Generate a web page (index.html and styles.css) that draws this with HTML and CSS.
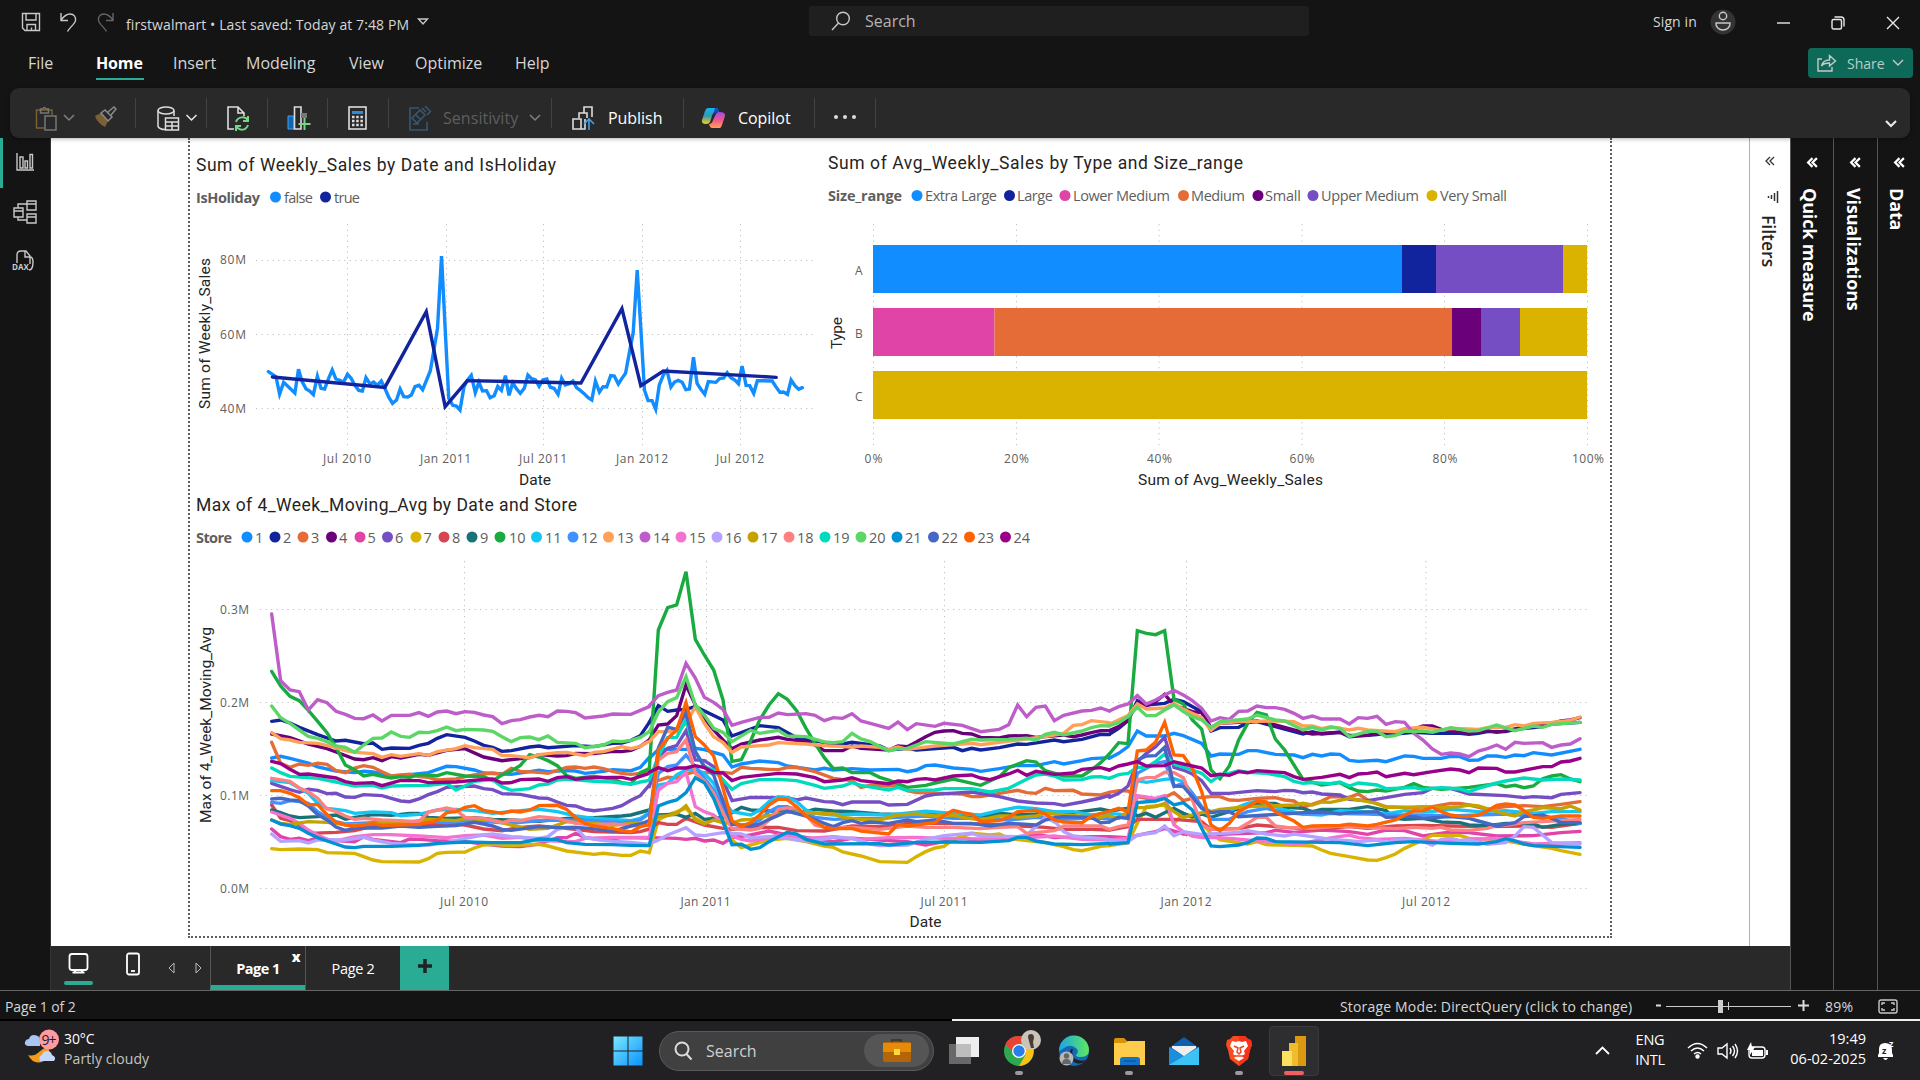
FILE: index.html
```html
<!DOCTYPE html>
<html lang="en">
<head>
<meta charset="utf-8">
<title>firstwalmart</title>
<link rel="stylesheet" href="styles.css">
</head>
<body>
<div class="app">
  <header class="titlebar">
    <div class="quick">
      <svg width="22" height="22" viewBox="0 0 22 22" class="ln"><path d="M2.5 2.500h17v17h-14.500l-2.500-2.500zM6 2.500v6.500h10V2.500M7 19.500v-6h8.500v6M11.500 19.500v-3"/></svg>
      <svg width="20" height="22" viewBox="0 0 20 22" class="ln"><path d="M3 2v7.500h7M3 9C6 5 9 3 12 3c4 0 6 3 5.500 6.500C17 13 11 17 9.500 20.500"/></svg>
      <svg width="20" height="22" viewBox="0 0 20 22" class="ln off"><path d="M17 2v7.500h-7M17 9C14 5 11 3 8 3 4 3 2 6 2.500 9.500 3 13 9 17 10.500 20.500"/></svg>
      <span class="docname">firstwalmart • Last saved: Today at 7:48 PM</span>
      <svg width="12" height="8" viewBox="0 0 12 8" class="ln"><path d="M1.500 1h9L6 6z"/></svg>
    </div>
    <div class="topsearch">
      <svg width="20" height="20" viewBox="0 0 20 20" class="ln"><circle cx="12" cy="7.500" r="6.300"/><path d="M7.500 12L1 19"/></svg>
      <span>Search</span>
    </div>
    <div class="account">
      <span class="signin">Sign in</span>
      <svg width="26" height="26" viewBox="0 0 26 26"><circle cx="13" cy="13" r="12.500" fill="#333"/><g class="ln"><circle cx="13" cy="7" r="3.700"/><path d="M6 14h14c.5 4-3 7-7 7s-7.500-3-7-7z"/></g></svg>
      <svg class="wbtn" width="13" height="13" viewBox="0 0 13 13"><path class="lw" d="M0 6h13"/></svg>
      <svg class="wbtn" width="14" height="14" viewBox="0 0 14 14"><rect class="lw" x="1" y="3.500" width="9.500" height="9.500" rx="1.500"/><path class="lw" d="M3.500 1h6.500q3 0 3 3v6.500"/></svg>
      <svg class="wbtn" width="14" height="14" viewBox="0 0 14 14"><path class="lw" d="M1 1l12 12M13 1L1 13"/></svg>
    </div>
  </header>

  <nav class="menu">
    <span class="m-file">File</span><span class="m-home">Home</span><span class="m-insert">Insert</span><span class="m-model">Modeling</span><span class="m-view">View</span><span class="m-opt">Optimize</span><span class="m-help">Help</span>
    <button class="share">
      <svg width="20" height="18" viewBox="0 0 20 18" class="ln"><path d="M5 5H1v12h14v-4M4.500 12c1-4 4-6 8-6V1.500l6 5.500-6 5V9c-3 0-6 0-8 3z"/></svg>
      <span>Share</span>
      <svg width="12" height="8" viewBox="0 0 12 8" class="ln"><path d="M1 1l5 5 5-5"/></svg>
    </button>
  </nav>

  <div class="ribbon">
    <div class="rgroup g1">
      <svg width="22" height="25" viewBox="0 0 22 25" fill="none" stroke-width="1.500"><path d="M10 22H1.500V4H17v5" stroke="#7d5f35"/><path d="M5.500 4.500V3H8q1-3 3 0h2.500v4h-8z" stroke="#777"/><rect x="10" y="10" width="11" height="14" stroke="#777" fill="#292929"/></svg>
      <svg class="chev off" width="12" height="8" viewBox="0 0 12 8"><path d="M1 1l5 5 5-5"/></svg>
      <svg class="brush" width="23" height="22" viewBox="0 0 23 22"><path d="M1 10l6-3 7 8-3 6q-8-4-10-11z" fill="#7d5f35"/><path d="M7 7l4-3 7 7-4 4zM14 6l6-5 2 2-5 6" fill="#292929" stroke="#8a8a8a" stroke-width="1.500"/></svg>
    </div>
    <div class="rgroup g2">
      <svg width="23" height="25" viewBox="0 0 23 25" fill="none" stroke="#ddd" stroke-width="1.500"><ellipse cx="9" cy="4.500" rx="8" ry="3.500"/><path d="M1 4.500v16q2 3 7 3M17 4.500V10"/><path d="M8.500 12h13v12h-13zM8.500 16h13M8.500 20h13M15 16v8"/></svg>
      <svg class="chev" width="13" height="8" viewBox="0 0 12 8"><path d="M1 1l5 5 5-5"/></svg>
    </div>
    <div class="rgroup g3">
      <svg width="23" height="25" viewBox="0 0 23 25" fill="none" stroke-width="1.600"><path d="M7 23H1V1h10l6 6v3M11 1v6h6" stroke="#ddd"/><path d="M9 16c2-6 10-6 12-1m0-5v5h-5M21 19c-2 6-9 6-12 1m0 5v-5h5" stroke="#77d58a" stroke-width="2"/></svg>
    </div>
    <div class="rgroup g4">
      <svg width="24" height="25" viewBox="0 0 24 25" fill="none"><path d="M1 10h6v13H1z" fill="#1066b5" stroke="#43a0ea"/><path d="M7.500 1H14v22H7.500z" stroke="#ddd" stroke-width="1.600"/><path d="M14 7h6v5h-6z" fill="#777"/><path d="M17.500 12v12M11.500 18h12" stroke="#77d58a" stroke-width="2"/></svg>
    </div>
    <div class="rgroup g5">
      <svg width="20" height="25" viewBox="0 0 20 25"><rect x="1" y="1" width="17" height="22" fill="none" stroke="#ddd" stroke-width="1.600"/><path d="M4 5h11v3H4z" fill="#2f8bd8"/><path d="M4 11h11M4 15h11M4 19h11" stroke="#ddd" stroke-width="2.500" stroke-dasharray="2.500 1.700"/></svg>
    </div>
    <div class="rgroup g6">
      <svg width="23" height="25" viewBox="0 0 23 25" fill="none" stroke="#36566f" stroke-width="1.700"><path d="M10 2H1v22h17v-8M4 18h6M13 2l4 4M16 0l6 6M3 12l8-8 5 5-8 8zM7 9l5 5M18 9l3-3"/></svg>
      <span class="sens">Sensitivity</span>
      <svg class="chev off" width="12" height="8" viewBox="0 0 12 8"><path d="M1 1l5 5 5-5"/></svg>
    </div>
    <div class="rgroup g7">
      <svg width="24" height="25" viewBox="0 0 24 25" fill="none" stroke="#ddd" stroke-width="1.600"><path d="M1 13h8v10H1zM7 12V7h8v5M9 23h4V13M12 7V1h8v10"/><path d="M17 24V13M12 18l5-5 5 5" stroke="#43a0ea"/></svg>
      <span>Publish</span>
    </div>
    <div class="rgroup g8">
      <svg width="24" height="22" viewBox="0 0 24 22"><defs><linearGradient id="ca" x2="0" y2="1"><stop offset="0" stop-color="#17b4f0"/><stop offset=".5" stop-color="#2f9ab0"/><stop offset="1" stop-color="#ffca1b"/></linearGradient><linearGradient id="cb" x2="0" y2="1"><stop offset="0" stop-color="#a24de8"/><stop offset=".5" stop-color="#f0568c"/><stop offset="1" stop-color="#ffa255"/></linearGradient></defs><path d="M6 1h8q2 0 3 4h-4q-2 0-3 4l-2 6q-1 2-4 2-5 0-4-4l3-9q1-3 3-3z" fill="url(#ca)"/><path d="M13 1q3 0 4 4l-4 1-2 3z" fill="#1746c4"/><path d="M18 21h-8q-2 0-3-4 3 0 4-4l3-6q1-2 3-2 7 0 6 4l-3 9q-1 3-2 3z" fill="url(#cb)"/></svg>
      <span>Copilot</span>
    </div>
    <div class="rgroup g9"><i></i><i></i><i></i></div>
    <svg class="chev collapse" width="12" height="8" viewBox="0 0 12 8"><path d="M1 1l5 5 5-5"/></svg>
  </div>

  <main class="work">
    <aside class="rail">
      <span class="active"><svg width="18" height="18" viewBox="0 0 18 18" class="ln"><path d="M1 0v17h17M4 15V4h3v11zM9 15V8h2.500v7zM14 15V1.500h2.500V15z"/></svg></span>
      <span><svg width="24" height="24" viewBox="0 0 24 24" class="ln"><path d="M1 8h9v9H1zM1 11h9M14 1h9v9h-9zM14 4h9M14 14h9v9h-9zM14 17h9M5 8V4h9M5 17v3h9"/></svg></span>
      <span><svg width="23" height="23" viewBox="0 0 23 23" class="ln"><path d="M5 13V5q0-4 4-4h5l4 5v8M13 1v6h5M18 7q3 0 3 5 0 8-4 8"/><text class="daxt" x="0" y="20">DAX</text></svg></span>
    </aside>

    <section class="center">
      <div class="stage">
        <div class="canvas">
          <svg class="v1" width="630" height="350" viewBox="190 138 630 350">
            <text class="vt" x="196" y="171" textLength="360">Sum of Weekly_Sales by Date and IsHoliday</text>
            <text class="lg b" x="196" y="203" textLength="64">IsHoliday</text>
            <circle cx="275.500" cy="197" r="5.500" fill="#118dff"/><text class="lg" x="284" y="203" textLength="29">false</text>
            <circle cx="325.500" cy="197" r="5.500" fill="#12239e"/><text class="lg" x="334" y="203" textLength="26">true</text>
            <path class="gr" d="M256 260.500H813M256 334.500H813M256 408.500H813M347.500 224V447M446.500 224V447M543.500 224V447M642.500 224V447M740.500 224V447"/>
            <text class="tk" x="220" y="264" textLength="26">80M</text><text class="tk" x="220" y="338.500" textLength="26">60M</text><text class="tk" x="220" y="413" textLength="26">40M</text>
            <text class="tk" x="323" y="463" textLength="48">Jul 2010</text><text class="tk" x="420" y="463" textLength="51">Jan 2011</text><text class="tk" x="519" y="463" textLength="48">Jul 2011</text><text class="tk" x="616" y="463" textLength="52">Jan 2012</text><text class="tk" x="716" y="463" textLength="48">Jul 2012</text>
            <text class="ax" x="519" y="485" textLength="32">Date</text>
            <text class="ax" transform="translate(210 409) rotate(-90)" textLength="151">Sum of Weekly_Sales</text>
            <g class="p" transform="translate(190 200) scale(.4018 .33333)">
              <polyline stroke="#118dff" points="195,515 214,530 223,582 233,547 261,579 270,508 279,545 289,567 298,573 307,584 317,529 326,565 335,567 345,535 354,510 363,537 373,541 382,547 392,523 401,535 410,555 420,571 429,573 438,533 448,552 457,546 466,556 476,543 485,565 494,590 504,610 514,600 523,567 532,590 542,591 551,585 560,560 570,556 579,569 598,513 607,450 616,385 626,168 635,385 644,595 654,616 663,618 672,630 682,560 691,540 700,526 710,578 719,547 728,573 738,572 747,593 757,587 766,559 775,571 785,527 794,586 803,549 813,567 822,580 832,565 841,525 850,536 860,540 869,559 878,540 888,537 897,562 906,565 916,583 925,535 934,555 944,551 953,543 962,563 972,572 981,581 991,593 1000,600 1009,543 1019,576 1028,560 1037,561 1047,527 1056,528 1066,552 1075,535 1084,520 1094,455 1103,398 1113,210 1122,385 1131,570 1140,602 1150,602 1159,628 1168,555 1178,525 1187,511 1197,561 1206,546 1215,541 1225,547 1234,569 1243,567 1253,472 1262,550 1271,567 1281,583 1290,545 1309,547 1318,536 1328,534 1337,518 1346,533 1356,540 1365,551 1374,498 1384,556 1393,557 1403,580 1412,542 1449,543 1458,560 1468,577 1477,576 1487,583 1496,540 1506,558 1515,568 1524,563"/>
              <polyline stroke="#12239e" points="205,531 485,562 588,335 635,620 690,542 973,549 1075,326 1122,557 1178,513 1459,532"/>
            </g>
          </svg>
          <svg class="v2" width="790" height="350" viewBox="820 138 790 350">
            <text class="vt" x="828" y="169" textLength="415">Sum of Avg_Weekly_Sales by Type and Size_range</text>
            <text class="lg b" x="828" y="201" textLength="74">Size_range</text>
            <circle cx="917" cy="195.500" r="5.500" fill="#118dff"/><text class="lg" x="925" y="201" textLength="72">Extra Large</text>
            <circle cx="1009.500" cy="195.500" r="5.500" fill="#12239e"/><text class="lg" x="1017" y="201" textLength="36">Large</text>
            <circle cx="1065" cy="195.500" r="5.500" fill="#e044a7"/><text class="lg" x="1073" y="201" textLength="97">Lower Medium</text>
            <circle cx="1183.500" cy="195.500" r="5.500" fill="#e66c37"/><text class="lg" x="1191" y="201" textLength="54">Medium</text>
            <circle cx="1258" cy="195.500" r="5.500" fill="#6b007b"/><text class="lg" x="1265" y="201" textLength="36">Small</text>
            <circle cx="1313" cy="195.500" r="5.500" fill="#744ec2"/><text class="lg" x="1321" y="201" textLength="98">Upper Medium</text>
            <circle cx="1432" cy="195.500" r="5.500" fill="#d9b300"/><text class="lg" x="1440" y="201" textLength="67">Very Small</text>
            <path class="gr" d="M873.500 224V447M1016.500 224V447M1159 224V447M1302 224V447M1444.500 224V447M1587.500 224V447"/>
            <path fill="#118dff" d="M873 245h529v48h-529z"/><path fill="#12239e" d="M1402 245h34v48h-34z"/><path fill="#744ec2" d="M1436 245h127v48h-127z"/><path fill="#d9b300" d="M1563 245h24v48h-24zM1520 308h67v48h-67zM873 371h714v48H873z"/>
            <path fill="#e044a7" d="M873 308h121.500v48H873z"/><path fill="#e66c37" d="M994.500 308H1452v48H994.500z"/><path fill="#6b007b" d="M1452 308h29v48h-29z"/><path fill="#744ec2" d="M1481 308h39v48h-39z"/>
            <text class="tk" x="855" y="275">A</text><text class="tk" x="855" y="338">B</text><text class="tk" x="855" y="401">C</text>
            <text class="tk" x="864.500" y="463" textLength="18">0%</text><text class="tk" x="1004" y="463" textLength="25">20%</text><text class="tk" x="1147" y="463" textLength="25">40%</text><text class="tk" x="1289.500" y="463" textLength="25">60%</text><text class="tk" x="1432.500" y="463" textLength="25">80%</text><text class="tk" x="1572" y="463" textLength="32">100%</text>
            <text class="ax" x="1138" y="485" textLength="185">Sum of Avg_Weekly_Sales</text>
            <text class="ax" transform="translate(842 349) rotate(-90)" textLength="32">Type</text>
          </svg>
          <svg class="v3" width="1420" height="445" viewBox="190 488 1420 445">
            <text class="vt" x="196" y="511" textLength="381">Max of 4_Week_Moving_Avg by Date and Store</text>
            <text class="lg b" x="196" y="543" textLength="36">Store</text>
            <g transform="translate(0 537)">
              <circle class="f1" cx="247" r="5.500"/><circle class="f2" cx="275" r="5.500"/><circle class="f3" cx="303" r="5.500"/><circle class="f4" cx="331.500" r="5.500"/><circle class="f5" cx="360" r="5.500"/><circle class="f6" cx="387.500" r="5.500"/><circle class="f7" cx="416" r="5.500"/><circle class="f8" cx="444" r="5.500"/><circle class="f9" cx="472" r="5.500"/><circle class="f10" cx="500" r="5.500"/><circle class="f11" cx="536.500" r="5.500"/><circle class="f12" cx="573" r="5.500"/><circle class="f13" cx="608.500" r="5.500"/><circle class="f14" cx="645" r="5.500"/><circle class="f15" cx="681" r="5.500"/><circle class="f16" cx="717" r="5.500"/><circle class="f17" cx="753" r="5.500"/><circle class="f18" cx="789" r="5.500"/><circle class="f19" cx="825" r="5.500"/><circle class="f20" cx="861" r="5.500"/><circle class="f21" cx="897" r="5.500"/><circle class="f22" cx="933.500" r="5.500"/><circle class="f23" cx="969.500" r="5.500"/><circle class="f24" cx="1005.500" r="5.500"/>
            </g>
            <g class="lg">
              <text x="255" y="543">1</text><text x="283" y="543">2</text><text x="311" y="543">3</text><text x="339" y="543">4</text><text x="367.500" y="543">5</text><text x="395" y="543">6</text><text x="423.500" y="543">7</text><text x="452" y="543">8</text><text x="480" y="543">9</text><text x="509" y="543">10</text><text x="545" y="543">11</text><text x="581" y="543">12</text><text x="617" y="543">13</text><text x="653" y="543">14</text><text x="689" y="543">15</text><text x="725" y="543">16</text><text x="761" y="543">17</text><text x="797" y="543">18</text><text x="833" y="543">19</text><text x="869" y="543">20</text><text x="905" y="543">21</text><text x="941.500" y="543">22</text><text x="977.500" y="543">23</text><text x="1013.500" y="543">24</text>
            </g>
            <path class="gr" d="M260 609.500H1587M260 702.500H1587M260 795.500H1587M260 888.500H1587M464.500 561V889M706.500 561V889M944.500 561V889M1186.500 561V889M1426 561V889"/>
            <text class="tk" x="220" y="614" textLength="29">0.3M</text><text class="tk" x="220" y="707" textLength="29">0.2M</text><text class="tk" x="220" y="800" textLength="29">0.1M</text><text class="tk" x="220" y="893" textLength="29">0.0M</text>
            <text class="tk" x="440" y="906" textLength="48">Jul 2010</text><text class="tk" x="680.500" y="906" textLength="50">Jan 2011</text><text class="tk" x="920.500" y="906" textLength="47">Jul 2011</text><text class="tk" x="1160.500" y="906" textLength="51">Jan 2012</text><text class="tk" x="1402" y="906" textLength="48">Jul 2012</text>
            <text class="ax" x="909.500" y="927" textLength="32">Date</text>
            <text class="ax" transform="translate(211 823) rotate(-90)" textLength="196">Max of 4_Week_Moving_Avg</text>
            <!-- February to November 2010 -->
            <g class="p" transform="translate(190 480) scale(.33333)">
              <polyline class="s1" points="245,834 272,829 300,835 355,849 383,861 438,873 494,878 521,874 549,876 604,888 659,884 715,878 770,859 798,860 853,870 881,879 964,883 1019,875 1047,871 1074,875 1130,872 1157,873 1185,880 1240,874 1268,869 1323,872 1351,862 1378,832"/>
              <polyline class="s2" points="245,724 272,720 300,729 328,742 383,764 438,783 466,781 521,791 549,789 576,808 604,804 659,805 687,796 715,790 742,775 770,764 825,772 853,783 881,796 908,802 936,814 964,812 1019,801 1047,798 1074,803 1157,797 1212,800 1268,790 1295,789 1323,781 1351,767 1378,727"/>
              <polyline class="s3" points="245,787 272,850 300,862 328,852 355,856 383,850 411,853 438,872 466,878 494,864 521,857 549,862 576,875 604,888 659,883 687,890 715,892 742,900 798,897 825,890 853,885 908,879 936,883 964,865 991,874 1047,877 1074,880 1130,862 1157,861 1185,865 1212,861 1240,866 1268,874 1295,880 1323,883 1351,880 1378,878"/>
              <polyline class="s4" points="245,762 300,773 355,792 411,806 438,816 494,837 521,839 549,833 576,842 604,830 632,834 687,823 715,826 770,811 825,806 881,831 936,842 1019,833 1047,824 1102,828 1130,827 1157,820 1212,821 1268,814 1295,815 1323,811 1351,799 1378,780"/>
              <polyline class="s5" points="245,1047 272,1070 300,1078 328,1075 355,1082 383,1074 438,1082 494,1085 521,1070 549,1078 632,1088 659,1077 687,1078 742,1082 825,1085 881,1092 936,1098 991,1100 1047,1092 1074,1083 1102,1073 1130,1073 1157,1060 1185,1073 1240,1080 1295,1073 1378,1074"/>
              <polyline class="s6" points="245,910 300,929 328,937 355,928 383,931 411,941 438,940 466,951 494,952 521,944 576,947 604,955 632,963 659,965 687,957 715,944 742,935 770,922 853,918 881,926 908,929 936,941 991,943 1047,954 1074,955 1102,966 1130,976 1157,978 1185,988 1212,992 1240,989 1268,985 1295,977 1323,961 1351,947 1378,915"/>
              <polyline class="s7" points="245,1106 272,1109 328,1107 383,1109 411,1118 494,1120 521,1130 549,1140 576,1145 687,1146 715,1136 742,1120 770,1117 825,1116 853,1104 881,1095 908,1093 964,1097 1047,1093 1074,1098 1130,1113 1212,1123 1240,1120 1295,1126 1323,1126 1351,1113 1378,1118"/>
              <polyline class="s8" points="245,975 272,1015 300,1022 328,1035 355,1060 438,1057 494,1052 549,1038 604,1035 687,1038 770,1030 825,1035 881,1047 936,1052 991,1042 1047,1038 1102,1043 1157,1048 1212,1055 1323,1058 1351,1055 1378,1047"/>
              <polyline class="s9" points="245,990 272,998 300,1008 328,1013 383,1010 438,1005 466,1018 494,1012 549,1004 604,1006 659,1000 687,1000 715,1012 770,1015 853,1013 908,1018 964,1020 1047,1024 1130,1015 1212,1013 1295,1008 1323,1005 1378,990"/>
              <polyline class="s10" points="245,574 272,618 300,649 328,662 355,691 383,724 411,758 438,802 466,855 494,869 521,888 549,883 576,889 604,894 632,890 659,892 687,884 742,887 770,878 825,888 881,890 908,902 936,885 964,873 991,856 1019,824 1047,831 1074,842 1102,857 1130,887 1157,895 1212,889 1268,897 1295,908 1323,912 1351,878 1378,866"/>
              <polyline class="s11" points="245,902 300,908 328,925 355,940 383,970 411,985 438,988 466,992 494,1000 549,996 604,998 632,1007 687,1003 742,990 798,988 853,992 908,1000 991,992 1047,988 1102,995 1157,1008 1212,1015 1268,1018 1323,1022 1351,1015 1378,998"/>
              <polyline class="s12" points="245,967 272,970 300,962 328,965 355,970 383,995 411,1012 438,1025 466,1032 549,1028 604,1026 659,1030 715,1025 770,1028 853,1020 908,1026 964,1030 1047,1022 1130,1020 1212,1022 1295,1028 1351,1020 1378,1000"/>
              <polyline class="s13" points="245,758 272,776 300,780 328,787 383,790 438,803 466,812 494,817 549,821 576,832 604,824 632,829 687,821 715,826 742,815 798,806 825,797 853,803 908,808 936,827 964,827 1019,833 1047,824 1102,818 1130,817 1185,827 1212,817 1240,815 1295,800 1323,806 1351,799 1378,783"/>
              <polyline class="s14" points="245,402 272,602 300,630 328,635 355,690 383,659 411,668 438,694 466,703 494,715 521,716 549,705 576,723 604,706 659,706 687,698 715,709 742,696 770,693 798,701 825,695 853,697 881,705 908,710 936,731 964,722 991,719 1019,711 1047,706 1074,710 1102,693 1130,694 1157,698 1185,714 1240,708 1268,702 1323,703 1351,691 1378,680"/>
              <polyline class="s15" points="245,996 272,1005 300,1015 328,1030 355,1050 383,1065 411,1078 438,1083 494,1070 549,1064 604,1064 687,1068 770,1073 825,1067 881,1065 936,1075 991,1072 1047,1082 1157,1085 1185,1075 1268,1072 1378,1072"/>
              <polyline class="s16" points="245,1062 272,1084 328,1082 355,1089 383,1080 466,1080 521,1072 549,1080 604,1090 659,1093 715,1095 770,1088 825,1075 881,1065 908,1062 964,1070 1047,1075 1074,1070 1102,1048 1130,1042 1157,1042 1185,1073 1240,1082 1323,1087 1378,1093"/>
              <polyline class="s17" points="245,1020 272,1030 300,1033 355,1025 411,1027 466,1034 521,1034 576,1028 632,1030 715,1018 798,1022 825,1016 908,1020 964,1035 1019,1048 1074,1045 1130,1025 1212,1030 1268,1036 1323,1030 1378,1028"/>
              <polyline class="s18" points="245,895 300,904 328,924 355,935 383,955 411,987 438,994 466,1008 494,1018 521,1015 576,1020 632,1022 687,1025 715,996 770,984 798,990 825,1012 881,1015 936,1028 964,1020 991,1022 1047,1010 1102,1015 1157,1030 1212,1035 1268,1032 1323,1037 1378,1035"/>
              <polyline class="s19" points="245,864 272,878 300,889 383,895 438,906 494,918 549,916 576,924 604,918 659,917 715,916 770,910 798,930 825,918 853,904 908,899 936,920 964,931 1019,926 1047,915 1074,912 1102,900 1130,897 1212,904 1268,906 1323,913 1351,906 1378,901"/>
              <polyline class="s20" points="245,678 272,713 300,730 328,750 355,769 383,775 411,785 438,798 466,802 494,817 521,795 549,775 576,774 604,756 632,769 659,772 687,757 715,758 742,752 770,741 798,752 825,748 881,750 908,754 936,770 964,785 991,773 1019,771 1047,779 1074,768 1102,787 1157,790 1185,803 1240,795 1268,783 1295,785 1323,781 1351,772 1378,755"/>
              <polyline class="s21" points="245,1020 272,1032 300,1037 328,1045 355,1060 383,1073 438,1092 466,1101 494,1103 521,1099 604,1099 687,1096 742,1090 825,1086 908,1088 991,1088 1019,1083 1047,1077 1102,1079 1130,1088 1185,1093 1268,1094 1323,1096 1378,1097"/>
              <polyline class="s22" points="245,957 272,955 300,960 328,962 355,978 383,1004 411,1020 438,1041 466,1051 494,1044 576,1044 632,1038 687,1042 742,1039 798,1037 853,1027 881,1032 908,1038 936,1048 964,1051 1047,1040 1102,1043 1157,1042 1212,1046 1268,1054 1295,1046 1323,1038 1351,1032 1378,1022"/>
              <polyline class="s23" points="245,932 272,932 300,940 328,953 355,974 383,974 411,1004 438,1027 466,1035 494,1038 521,1035 549,1031 576,1036 632,1035 687,1033 715,1027 742,1021 770,998 798,995 825,982 853,977 881,991 936,1000 964,993 991,996 1019,990 1047,977 1102,976 1130,988 1157,1013 1185,1030 1212,1038 1268,1046 1323,1056 1351,1040 1378,1034"/>
              <polyline class="s24" points="245,844 272,851 300,868 328,883 355,882 438,894 466,905 494,910 549,908 576,917 632,901 687,902 715,908 798,906 881,898 908,897 936,909 964,908 991,899 1047,897 1074,904 1102,893 1130,890 1157,898 1185,894 1268,892 1295,892 1323,898 1351,889 1378,880"/>
            </g>
            <!-- November 2010 to October 2011 -->
            <g class="p" transform="translate(640 540) scale(.33333)">
              <polyline class="s1" points="28,655 55,628 138,628 166,625 193,629 249,645 276,681 304,672 359,663 415,668 442,678 525,690 553,685 580,690 636,686 691,690 774,688 802,695 829,690 857,677 885,675 940,684 995,688 1022,694 1078,686 1133,676 1188,677 1243,665 1271,672 1326,662 1354,656 1408,653"/>
              <polyline class="s2" points="28,547 55,497 83,514 110,510 138,508 166,500 249,540 276,588 359,557 415,563 470,593 580,612 608,612 636,607 719,618 746,630 802,625 829,630 940,622 967,632 995,625 1022,630 1078,623 1133,612 1160,613 1243,600 1271,605 1326,598 1382,583 1408,584"/>
              <polyline class="s3" points="28,697 55,722 83,712 110,714 138,702 166,695 193,698 221,698 249,697 276,700 304,682 332,685 387,688 415,689 442,683 470,682 525,695 580,715 636,722 663,742 691,736 746,738 774,735 802,752 829,758 912,760 967,762 995,770 1022,770 1078,760 1133,751 1160,758 1188,760 1216,745 1243,752 1300,751 1326,762 1382,765 1408,757"/>
              <polyline class="s4" points="28,600 55,555 83,552 110,527 138,435 166,495 193,535 221,570 249,600 276,626 304,612 359,600 415,592 442,598 498,604 525,615 553,632 608,632 636,618 663,625 746,630 774,618 802,620 829,606 857,590 885,577 912,573 940,572 967,580 995,582 1022,592 1078,594 1106,588 1160,587 1188,592 1271,585 1300,590 1326,585 1354,578 1382,572 1408,572"/>
              <polyline class="s5" points="28,893 110,895 138,898 166,895 193,903 221,900 249,910 276,893 332,885 387,873 442,885 498,892 580,905 636,895 719,900 802,905 857,915 912,905 967,893 1022,905 1106,900 1188,883 1243,893 1326,890 1408,890"/>
              <polyline class="s6" points="28,740 55,650 83,625 110,617 138,572 166,660 193,662 221,680 249,722 276,782 332,772 442,773 470,780 498,774 553,785 580,786 608,794 636,786 719,786 746,795 802,793 857,768 885,763 995,756 1050,765 1078,770 1133,783 1188,789 1243,791 1271,796 1326,786 1382,774 1408,766"/>
              <polyline class="s7" points="28,938 55,840 83,825 138,805 166,835 193,850 221,830 249,840 276,900 304,923 332,915 387,900 442,895 498,905 553,918 580,922 608,936 663,948 719,965 802,967 829,950 857,935 885,924 912,919 940,898 995,880 1050,885 1078,882 1106,895 1160,902 1216,908 1271,920 1300,929 1326,932 1354,926 1382,919 1408,917"/>
              <polyline class="s8" points="28,868 55,848 83,853 110,853 138,835 193,855 249,865 276,868 332,863 415,862 470,872 553,873 636,858 719,860 802,850 885,850 1022,852 1106,856 1216,862 1271,868 1354,868 1408,870"/>
              <polyline class="s9" points="28,812 55,825 110,823 138,832 166,820 193,838 221,835 249,832 276,818 304,802 332,810 387,813 442,815 498,815 525,808 580,813 636,815 719,822 774,823 857,825 940,822 995,830 1022,832 1078,820 1133,825 1188,822 1243,815 1300,818 1382,807 1408,813"/>
              <polyline class="s10" points="28,687 55,270 83,203 110,195 138,95 166,298 193,345 221,390 249,480 276,664 304,659 332,602 359,540 387,495 415,461 442,478 470,512 498,565 525,610 553,653 580,686 608,684 636,698 691,698 719,712 746,720 802,742 857,736 885,729 940,717 1022,736 1078,710 1106,683 1160,662 1188,666 1216,692 1271,708 1326,708 1354,690 1382,668 1408,642"/>
              <polyline class="s11" points="28,818 55,735 83,730 110,705 138,690 166,688 193,700 221,730 249,780 276,815 332,825 359,810 387,785 415,770 442,772 470,785 498,810 525,820 580,825 663,822 746,825 857,814 940,820 1022,825 1078,812 1133,802 1188,806 1243,815 1300,815 1354,825 1408,820"/>
              <polyline class="s12" points="28,820 55,700 83,680 110,675 138,645 166,680 193,715 221,750 249,800 276,850 304,858 332,850 359,840 387,815 415,800 442,800 498,820 525,832 580,838 663,835 719,835 774,832 857,828 940,835 1022,835 1106,840 1188,832 1271,838 1326,835 1408,835"/>
              <polyline class="s13" points="28,605 55,575 83,575 110,575 138,550 166,500 193,550 221,590 249,608 276,637 304,621 387,615 415,608 498,612 553,617 636,621 663,618 719,622 746,628 774,621 802,628 885,618 995,610 1022,614 1078,607 1133,600 1216,590 1271,580 1300,556 1326,554 1354,542 1408,548"/>
              <polyline class="s14" points="28,497 55,467 83,457 110,450 138,370 166,414 193,472 221,487 249,508 276,556 304,547 359,532 387,532 415,519 442,524 498,521 525,526 553,542 580,533 608,535 636,521 663,543 691,550 746,565 774,546 802,569 829,551 885,559 912,550 967,556 1022,575 1078,568 1106,554 1133,495 1160,530 1188,502 1216,498 1243,542 1271,526 1326,513 1354,511 1382,504 1408,513"/>
              <polyline class="s15" points="28,892 55,750 83,730 110,725 138,697 166,800 193,815 221,825 249,850 276,888 304,898 332,903 359,900 415,885 442,888 498,895 580,890 663,898 746,893 829,892 912,895 1022,897 1133,895 1243,888 1326,898 1408,900"/>
              <polyline class="s16" points="28,912 55,900 83,885 138,863 166,885 193,887 249,878 276,880 304,882 332,893 387,890 442,895 498,903 553,897 580,892 636,895 691,912 719,917 802,915 857,898 912,887 995,880 1022,888 1133,890 1160,885 1188,860 1216,832 1250,850 1271,875 1300,888 1408,898"/>
              <polyline class="s17" points="28,848 55,830 83,827 110,820 138,797 166,840 193,852 221,840 249,848 276,850 304,840 332,838 387,827 415,822 442,816 525,819 580,822 608,832 663,838 719,840 774,825 829,822 885,828 940,825 967,832 1022,840 1078,828 1106,828 1133,832 1188,828 1216,820 1271,825 1382,832 1408,825"/>
              <polyline class="s18" points="28,850 55,660 83,640 110,635 138,600 166,700 193,723 221,760 249,820 276,865 332,870 359,865 387,840 415,808 442,804 470,804 498,825 525,855 553,862 636,862 719,868 746,865 802,858 857,862 940,862 1022,866 1078,862 1133,860 1160,880 1216,875 1243,872 1271,858 1326,858 1382,858 1408,868"/>
              <polyline class="s19" points="28,720 55,650 83,593 110,592 138,540 166,635 193,680 221,690 249,720 276,748 304,731 359,719 415,718 470,722 525,736 553,745 608,738 636,728 663,736 746,750 774,742 802,752 885,750 912,746 995,746 1050,756 1106,745 1160,718 1188,705 1216,702 1243,708 1271,720 1326,719 1354,711 1382,710 1408,715"/>
              <polyline class="s20" points="28,575 55,516 83,485 110,473 138,410 166,495 193,525 221,565 249,577 276,605 332,571 359,580 415,571 442,588 498,590 553,606 580,608 608,605 636,580 663,597 691,605 746,633 774,626 802,625 857,605 940,612 995,598 1022,600 1106,598 1160,595 1188,600 1216,583 1243,577 1271,585 1326,573 1354,563 1382,557 1408,558"/>
              <polyline class="s21" points="28,916 55,798 83,787 110,780 138,758 166,713 193,728 221,775 249,845 276,914 304,913 332,928 359,923 387,905 415,890 442,877 470,882 498,898 553,912 719,911 746,915 829,907 940,906 1022,907 1106,902 1133,892 1160,892 1188,903 1243,912 1326,914 1408,910"/>
              <polyline class="s22" points="28,845 55,625 83,562 110,568 138,518 166,635 193,680 221,705 249,785 276,853 304,855 332,857 359,852 387,838 415,826 442,813 498,828 553,850 580,860 608,848 636,842 663,850 691,846 746,850 802,840 829,845 885,840 940,850 995,850 1050,858 1106,850 1188,855 1216,840 1243,833 1271,830 1354,832 1382,848 1408,846"/>
              <polyline class="s23" points="28,855 55,630 83,595 110,570 138,488 166,590 193,615 221,648 249,745 276,843 304,860 332,848 359,825 387,795 415,777 442,779 470,800 498,828 525,845 553,862 580,866 636,865 663,873 746,882 774,853 802,858 885,848 912,826 940,811 967,818 995,823 1022,845 1078,842 1106,832 1133,815 1188,811 1216,822 1243,840 1271,846 1326,848 1354,829 1382,820 1408,814"/>
              <polyline class="s24" points="28,697 55,683 83,692 110,684 138,684 166,677 193,683 221,697 249,699 276,722 304,712 387,703 415,700 470,702 525,713 553,725 608,720 636,713 663,722 746,731 774,723 802,725 829,718 857,716 885,720 940,708 995,705 1022,714 1050,719 1106,702 1133,691 1160,706 1188,694 1243,703 1300,699 1326,688 1382,683 1408,690"/>
            </g>
            <!-- October 2011 to October 2012 -->
            <g class="p" transform="translate(1100 540) scale(.33333)">
              <polyline class="s1" points="28,655 56,640 84,620 112,573 139,588 194,588 222,580 250,587 305,610 333,648 360,642 416,643 443,632 471,632 526,643 582,645 609,653 637,643 665,648 692,642 720,643 748,661 775,664 831,661 858,665 914,648 941,649 969,655 1024,655 1052,649 1080,650 1107,661 1135,660 1162,648 1190,648 1217,652 1245,645 1272,647 1300,638 1355,645 1440,628"/>
              <polyline class="s2" points="28,583 56,565 84,542 112,482 139,495 194,490 222,478 250,485 305,515 333,573 360,563 416,562 443,548 471,545 526,560 609,582 637,575 665,582 720,577 748,590 831,584 858,580 886,582 941,577 997,580 1080,580 1107,583 1135,580 1162,575 1217,575 1245,568 1328,560 1355,552 1440,547"/>
              <polyline class="s3" points="28,757 56,752 84,753 112,770 167,780 194,772 222,758 250,782 277,775 333,770 360,770 388,780 416,781 471,775 526,773 554,780 582,783 609,802 665,783 692,770 748,772 775,762 803,780 831,792 858,800 941,803 997,800 1052,790 1080,790 1107,795 1162,808 1217,800 1272,797 1328,800 1383,793 1440,785"/>
              <polyline class="s4" points="28,572 56,560 84,540 112,488 139,498 167,485 194,463 222,495 277,515 305,518 333,562 360,550 416,547 471,543 526,555 582,570 637,582 720,577 748,586 803,586 858,575 914,577 969,558 997,558 1024,568 1080,577 1107,580 1162,572 1190,577 1217,573 1300,555 1355,550 1383,543 1411,540 1440,533"/>
              <polyline class="s5" points="28,890 84,893 139,880 167,875 194,865 250,882 305,885 360,883 443,880 499,878 526,871 582,877 665,870 748,875 803,883 858,870 914,872 969,888 1052,876 1107,878 1190,888 1300,887 1383,878 1440,874"/>
              <polyline class="s6" points="28,772 56,760 84,738 112,665 139,640 167,620 194,592 222,682 250,690 277,702 305,722 333,760 388,760 471,752 526,755 554,751 582,752 609,758 637,756 665,762 720,765 748,778 803,782 858,773 914,763 969,758 997,745 1052,745 1107,762 1217,767 1272,773 1300,770 1355,773 1383,763 1440,758"/>
              <polyline class="s7" points="28,917 84,908 112,850 139,800 194,795 222,850 250,820 305,850 333,880 360,900 416,908 443,912 471,905 499,914 609,917 637,918 665,930 692,940 748,950 803,960 831,961 858,953 886,942 914,925 969,900 997,886 1080,886 1107,895 1190,898 1272,912 1300,917 1355,925 1383,932 1440,943"/>
              <polyline class="s8" points="28,870 84,860 112,838 222,838 305,845 333,868 416,866 471,855 554,862 637,868 748,860 803,865 886,858 969,856 1052,858 1162,860 1272,858 1355,862 1440,850"/>
              <polyline class="s9" points="28,813 84,805 112,828 139,820 167,832 194,818 222,805 250,820 277,830 305,822 333,832 388,815 443,798 471,790 526,790 554,802 609,805 637,815 665,808 748,808 803,800 858,812 886,835 914,838 969,835 1024,846 1080,848 1107,855 1162,857 1217,850 1300,852 1328,862 1383,853 1440,850"/>
              <polyline class="s10" points="28,642 56,608 84,611 112,272 139,280 167,284 194,272 222,478 250,492 277,540 305,567 333,690 360,716 388,678 416,600 443,550 471,517 499,525 526,597 554,630 582,675 609,718 665,735 720,728 748,743 775,753 803,755 831,750 858,753 914,742 941,731 969,742 1024,748 1107,742 1162,735 1190,731 1217,740 1245,736 1272,743 1300,738 1328,716 1355,708 1383,704 1411,717 1440,725"/>
              <polyline class="s11" points="28,820 84,825 112,722 139,727 194,718 222,716 250,725 277,760 305,800 333,815 388,812 443,790 471,783 499,790 554,810 609,822 665,825 720,812 803,815 858,822 914,812 997,815 1052,808 1135,815 1217,812 1300,820 1355,815 1440,815"/>
              <polyline class="s12" points="28,835 84,830 112,700 167,670 194,665 222,740 250,730 277,760 305,800 333,838 388,838 416,825 443,815 499,805 554,818 609,822 692,820 803,822 886,825 969,825 1052,828 1135,825 1217,822 1300,828 1383,835 1440,850"/>
              <polyline class="s13" points="28,553 84,527 112,492 139,507 194,504 222,490 250,508 305,533 333,571 360,550 416,545 526,543 582,545 609,558 637,558 665,566 692,560 748,570 775,565 803,570 886,575 914,566 969,562 1024,571 1052,565 1135,568 1162,563 1217,562 1245,554 1272,558 1300,550 1355,547 1411,541 1440,531"/>
              <polyline class="s14" points="28,513 56,500 84,492 112,467 139,492 167,480 194,465 222,451 250,465 277,482 305,505 333,543 360,533 388,538 416,514 443,513 471,498 499,503 526,503 554,508 582,520 609,535 637,528 665,537 720,537 748,552 775,533 803,535 831,529 858,553 886,545 914,547 941,580 969,600 997,627 1024,643 1052,639 1080,642 1107,650 1135,633 1162,626 1190,615 1217,628 1245,607 1272,610 1328,608 1355,622 1383,615 1411,612 1440,596"/>
              <polyline class="s15" points="28,900 84,895 112,767 167,775 194,767 222,855 250,875 277,888 305,893 360,893 443,900 526,905 582,912 609,910 665,898 748,885 775,893 831,898 914,895 1024,905 1107,900 1190,895 1300,912 1440,908"/>
              <polyline class="s16" points="28,900 84,905 112,885 167,878 194,858 222,887 250,875 305,883 416,877 443,872 499,882 554,888 582,882 637,890 692,898 748,902 775,905 831,900 858,908 886,900 941,900 969,905 997,915 1024,898 1052,895 1080,902 1107,900 1162,913 1217,908 1245,888 1272,860 1300,862 1328,885 1355,908 1440,912"/>
              <polyline class="s17" points="28,828 56,835 84,815 112,803 139,803 167,800 194,790 222,815 250,832 305,818 333,815 360,808 443,800 499,798 582,795 609,790 637,795 665,786 692,787 748,775 803,785 831,790 858,802 914,802 969,800 1024,803 1080,800 1107,795 1135,798 1190,815 1217,822 1245,828 1272,815 1300,810 1328,803 1383,806 1411,798 1440,810"/>
              <polyline class="s18" points="28,868 56,860 84,855 112,720 139,713 167,712 194,697 222,698 250,713 277,780 305,855 333,868 416,866 443,850 471,832 499,832 526,858 554,862 637,865 720,858 803,862 886,866 941,862 997,865 1024,862 1052,870 1107,871 1162,865 1190,856 1217,856 1272,848 1328,845 1383,842 1440,838"/>
              <polyline class="s19" points="28,715 56,704 84,700 112,682 139,682 167,665 194,642 222,672 277,690 305,700 333,725 360,706 388,700 416,692 443,697 499,700 554,710 582,724 609,730 637,728 692,731 720,726 748,738 775,729 831,735 858,746 941,743 969,748 1024,743 1080,747 1107,755 1135,745 1190,729 1217,723 1272,714 1328,720 1383,717 1440,720"/>
              <polyline class="s20" points="28,557 56,548 84,530 112,502 139,527 167,527 194,510 222,494 250,515 277,530 305,540 333,562 360,545 443,537 471,525 526,540 554,543 609,570 637,562 665,570 692,562 720,565 748,590 803,574 831,574 858,590 886,587 914,574 969,573 997,577 1052,563 1107,573 1135,572 1190,555 1245,572 1300,558 1328,562 1355,553 1440,547"/>
              <polyline class="s21" points="28,912 84,908 112,788 167,783 194,775 222,795 250,788 277,810 305,865 333,918 360,920 416,915 443,908 471,894 499,895 526,905 720,908 803,917 886,908 941,905 1052,910 1135,912 1190,905 1217,896 1245,903 1272,912 1300,917 1440,922"/>
              <polyline class="s22" points="28,846 56,832 84,835 112,660 139,648 167,647 194,622 222,738 250,740 277,770 305,805 333,818 360,815 388,815 416,830 499,825 582,820 609,818 637,816 692,818 720,822 748,818 831,815 858,832 941,830 969,835 1052,830 1107,835 1135,843 1190,858 1245,848 1272,830 1328,825 1355,835 1383,848 1440,848"/>
              <polyline class="s23" points="28,814 56,805 84,815 112,633 139,630 167,606 194,547 222,645 250,647 277,685 305,755 333,855 360,872 388,850 416,815 443,800 471,783 499,786 526,815 554,830 582,843 609,862 637,858 720,856 748,853 803,858 831,853 886,840 914,825 941,813 969,812 997,802 1024,815 1052,825 1080,829 1107,829 1135,825 1162,813 1190,796 1217,792 1245,795 1272,812 1300,832 1328,835 1383,828 1440,828"/>
              <polyline class="s24" points="28,690 56,678 84,672 112,665 139,678 194,677 222,665 250,672 305,684 333,707 360,703 388,706 416,695 443,698 471,692 554,698 582,710 609,718 665,712 720,703 748,713 775,702 803,700 831,696 858,710 914,700 941,704 997,695 1052,687 1080,690 1107,698 1135,684 1190,685 1217,696 1245,696 1328,680 1355,680 1383,666 1411,663 1440,655"/>
            </g>
          </svg>
        </div>
        <aside class="filters">
          <svg class="dbl" width="10" height="10" viewBox="0 0 10 10"><path d="M5 1L1 5l4 4M9 1L5 5l4 4"/></svg>
          <svg class="ficon" width="12" height="12" viewBox="0 0 12 12"><path d="M10.500 0v12M7.500 2v8M4.500 4v4M1.500 5v2"/></svg>
          <span>Filters</span>
        </aside>
      </div>
      <div class="pages">
        <div class="device on"><svg width="24" height="24" viewBox="0 0 24 24" class="lw2"><rect x="3.500" y="2" width="18" height="16" rx="2.500"/><path d="M9 18v2.500M16 18v2.500M6.500 20.500h12"/></svg></div>
        <div class="device"><svg width="14" height="24" viewBox="0 0 14 24" class="lw2"><rect x="1" y="1.500" width="12" height="21" rx="2"/><path d="M5 19h4"/></svg></div>
        <svg class="arr" width="7" height="12" viewBox="0 0 7 12"><path d="M6 1v10L1 6z"/></svg>
        <svg class="arr r" width="7" height="12" viewBox="0 0 7 12"><path d="M1 1v10l5-5z"/></svg>
        <div class="tab current"><span>Page 1</span><b>x</b></div>
        <div class="tab"><span>Page 2</span></div>
        <div class="add"><svg width="14" height="14" viewBox="0 0 14 14"><path d="M7 0v14M0 7h14" stroke="#222" stroke-width="3.500"/></svg></div>
      </div>
    </section>

    <aside class="pane"><svg class="dbl" width="11" height="11" viewBox="0 0 10 10"><path d="M5 1L1 5l4 4M9 1L5 5l4 4"/></svg><span>Quick measure</span></aside>
    <aside class="pane"><svg class="dbl" width="11" height="11" viewBox="0 0 10 10"><path d="M5 1L1 5l4 4M9 1L5 5l4 4"/></svg><span>Visualizations</span></aside>
    <aside class="pane"><svg class="dbl" width="11" height="11" viewBox="0 0 10 10"><path d="M5 1L1 5l4 4M9 1L5 5l4 4"/></svg><span>Data</span></aside>
  </main>

  <footer class="status">
    <span class="pg">Page 1 of 2</span>
    <span class="mode">Storage Mode: DirectQuery (click to change)</span>
    <svg width="155" height="16" viewBox="0 0 155 16"><path d="M2 7.500h5M144 7.500h11M149.500 2v11" stroke="#ddd" stroke-width="2"/><path d="M12 8.500h125M74.500 4v8" stroke="#ccc"/><path d="M64 2h5v13h-5z" fill="#ccc"/></svg>
    <span class="pct">89%</span>
    <svg class="fit ln" width="20" height="15" viewBox="0 0 20 15"><rect x="1" y="1" width="18" height="13" rx="2"/><path d="M4 6V4h3M13 4h3v2M4 9v2h3M13 11h3V9"/></svg>
  </footer>

  <footer class="taskbar">
    <div class="weather">
      <svg width="36" height="36" viewBox="0 0 36 36"><path d="M4 17q-4-1-3-4 1-3 4-3 1-4 5-4 6 0 6 6v5z" fill="#aac4f4"/><path d="M4 26q6 2 11-3 4-4 9-5 4 8-4 14-10 5-16-6z" fill="#f29a1e"/><path d="M16 32q-2-5 2-6 1-4 5-4t5 4q5 2 2 6z" fill="#c3d8fb"/><circle cx="25" cy="10.500" r="10" fill="#ff99a2"/><text x="17.500" y="15.500" class="badge">9+</text></svg>
      <p><b>30°C</b>Partly cloudy</p>
    </div>
    <svg class="start" width="30" height="30" viewBox="0 0 30 30"><defs><linearGradient id="win" x2="1" y2="1"><stop stop-color="#7ae9ff"/><stop offset="1" stop-color="#0a92ff"/></linearGradient></defs><path fill="url(#win)" d="M.5.5h14v14H.5zM15.500.5h14v14h-14zM.5 15.500h14v14H.5zM15.500 15.500h14v14h-14z"/></svg>
    <div class="tsearch">
      <svg width="20" height="20" viewBox="0 0 20 20"><circle cx="8" cy="8" r="6.500" fill="none" stroke="#ddd" stroke-width="2"/><path d="M12.500 13l5 5.500" stroke="#ddd" stroke-width="2"/></svg>
      <span>Search</span>
      <i><svg width="30" height="24" viewBox="0 0 30 24"><path d="M10 4V1h9v3" fill="none" stroke="#3b3b3b" stroke-width="2"/><rect x="1" y="3" width="28" height="20" rx="2" fill="#b36508"/><path d="M1 4h28v9H1z" fill="#e58b09"/><rect x="12" y="10" width="6" height="6" fill="#ffd83a"/></svg></i>
    </div>
    <svg class="app1" width="30" height="30" viewBox="0 0 30 30"><path d="M0 8h22v20H0z" fill="#686868"/><path d="M7 1h23v20H7z" fill="#eee"/><path d="M7 8h15v13H7z" fill="#bdbdbd"/></svg>
    <svg class="app2" width="38" height="50" viewBox="0 0 38 50"><circle cx="15" cy="25" r="15" fill="#2da94f"/><path d="M15 10a15 15 0 0 1 13.500 8H15l-6 9-7.500-9A15 15 0 0 1 15 10z" fill="#ea4335"/><path d="M28 18a15 15 0 0 1-13 22l7-12-2-10z" fill="#fbc116"/><circle cx="15" cy="25" r="7" fill="#fff"/><circle cx="15" cy="25" r="5.700" fill="#2b7de9"/><circle cx="27" cy="14" r="10" fill="#c9c3b8"/><path d="M24 11q0-3 3-3t3 4l-1 4 1 6h-3l-2-7z" fill="#4a3b35"/><rect x="11" y="45" width="8" height="4" rx="2" fill="#9a9a9a"/></svg>
    <svg class="app3" width="30" height="30" viewBox="0 0 30 30"><defs><linearGradient id="ed" x2="1"><stop stop-color="#1ba4e8"/><stop offset="1" stop-color="#5ee85c"/></linearGradient></defs><circle cx="15" cy="15" r="15" fill="#1468b8"/><path d="M0 15a15 15 0 0 1 30-1q0 7-8 7-5 0-5-2 3-3 1-6-6-6-13-1-4 3-5 3z" fill="url(#ed)"/><path d="M12 13q-4 10 5 14 6 2 10-3-7 2-12-2-3-4-1-9z" fill="#202022"/><circle cx="7.500" cy="22.500" r="7" fill="#b7b7b7"/><circle cx="7.500" cy="20" r="2.700" fill="#666"/><path d="M3 28q0-5 4.500-5t4.500 5z" fill="#666"/></svg>
    <svg class="app4" width="32" height="50" viewBox="0 0 32 50"><path d="M0 14q0-2 2-2h8l4 4h16v10H0z" fill="#d99108"/><path d="M0 17h11l3-2h17v24H0z" fill="#fdcc4a"/><path d="M6 39v-5q0-3 3-3h14q3 0 3 3v5z" fill="#1273c8"/><path d="M10 35h12" stroke="#0a4f96"/><rect x="11" y="45" width="8" height="4" rx="2" fill="#9a9a9a"/></svg>
    <svg class="app5" width="30" height="30" viewBox="0 0 30 30"><path d="M0 12L15 1l15 11v17H0z" fill="#0d5fae"/><path d="M3 10h24l-12 10z" fill="#eee"/><path d="M0 11l30 18H0z" fill="#1b8fdc"/><path d="M30 11L0 29h30z" fill="#3cc3f6"/><path d="M3 10h24v2l-12 8L3 12z" fill="#eee"/></svg>
    <svg class="app6" width="26" height="50" viewBox="0 0 26 50"><path d="M7 10h12l3 3 3 1 1 5-2 5-2 9-9 7-9-7-2-9-2-5 1-5 3-1z" fill="#fb4b1e"/><path d="M13 10h6l3 3 3 1 1 5-2 5-2 9-9 7z" fill="#f9301a"/><path d="M6 15l4 1 3-1 3 1 4-1 2 5-4 5 1 3-3 2 2 2-5 3-5-3 2-2-3-2 1-3-4-5z" fill="#fff"/><path d="M8 20l4 2-1 4 2 2 2-2-1-4 4-2M9 30h8" fill="none" stroke="#f9401d" stroke-width="1.500"/><rect x="9" y="45" width="8" height="4" rx="2" fill="#9a9a9a"/></svg>
    <div class="pbi"><svg width="24" height="30" viewBox="0 0 24 30"><path d="M13 0h11v30H13z" fill="#d99a12"/><path d="M7 7h9v23H7z" fill="#efbd2c"/><path d="M0 15h10v15H0z" fill="#fadf61"/></svg><i></i></div>
    <div class="tray">
      <svg width="15" height="9" viewBox="0 0 15 9"><path d="M1 8l6.500-6.500L14 8" fill="none" stroke="#fff" stroke-width="1.800"/></svg>
      <p class="lang">ENG<br>INTL</p>
      <svg class="wifi" width="21" height="17" viewBox="0 0 21 17" fill="none" stroke="#fff" stroke-width="1.500"><path d="M1 6q9.500-9 19 0M4 9q6.500-6 13 0M7 12q3.500-3 7 0"/><circle cx="10.500" cy="14.500" r="1.500" fill="#fff"/></svg>
      <svg class="spk" width="21" height="18" viewBox="0 0 21 18" fill="none" stroke="#fff" stroke-width="1.400"><path d="M1 6h4l5-4v14l-5-4H1zM13 6q2 3 0 6M15.500 4q4 5 0 10M18 2q5 7 0 14"/></svg>
      <svg class="bat" width="21" height="18" viewBox="0 0 21 18"><rect x="2" y="5" width="16" height="11" rx="3" fill="none" stroke="#fff" stroke-width="1.400"/><path d="M5 8h11v6H5zM19 8h2v5h-2z" fill="#fff"/><path d="M4 0L0 8h3v5l5-8H5z" fill="#fff"/></svg>
      <p class="clock">19:49<br>06-02-2025</p>
      <svg class="bell" width="18" height="20" viewBox="0 0 18 20"><path d="M1 16v-2l1-2V8q0-6 6-6 7 0 7 7v3l1 2v2zM6 17h5q-2.500 4-5 0z" fill="#fff"/><text x="5" y="13" class="z1">z</text><text x="12" y="6" class="z2">z</text></svg>
    </div>
  </footer>
</div>
</body>
</html>
```
FILE: styles.css
```css
* { box-sizing: border-box; }
body { margin: 0; background: #141414; font-family: "Open Sans", "Noto Sans", sans-serif; color: #d6d6d6; overflow: hidden; }
p { margin: 0; }
svg { display: block; flex: none; overflow: visible; }
span { white-space: nowrap; }
.app { width: 1920px; height: 1080px; display: flex; flex-direction: column; }

.ln { fill: none; stroke: #c8c8c8; stroke-width: 1.4; }
.ln.off, .chev.off { opacity: .45; }
.lw { fill: none; stroke: #e8e8e8; stroke-width: 1.4; }
.lw2 { fill: none; stroke: #fff; stroke-width: 1.8; }
.chev { fill: none; stroke: #e8e8e8; stroke-width: 1.5; }

/* title bar */
.titlebar { height: 42px; display: grid; grid-template-columns: 809px 500px 1fr; }
.quick { display: flex; align-items: center; padding-left: 20px; height: 43px; }
.quick svg:nth-child(2) { margin-left: 16px; }
.quick svg:nth-child(3) { margin-left: 18px; }
.docname { width: 283px; margin: 5px 8px 0 10px; font-size: 14px; letter-spacing: .09px; }
.topsearch { margin-top: 6px; height: 30px; background: #1f1f1f; border-radius: 3px; display: flex; align-items: center; padding-left: 22px; gap: 14px; font-size: 16px; letter-spacing: 0; color: #b4b4b4; }
.account { display: flex; align-items: center; padding-left: 344px; }
.signin { width: 57px; font-size: 14px; letter-spacing: .1px; }
.account .wbtn { margin: 3px 0 0 41px; }
.account .wbtn:nth-of-type(2) { margin-left: 41px; }

/* menu */
.menu { height: 46px; display: flex; align-items: flex-start; padding: 8px 7px 0 28px; font-size: 16px; letter-spacing: 0; }
.menu > span { height: 30px; line-height: 26px; }
.m-file { width: 68px; }
.m-home { width: 48px; margin-right: 29px; font-weight: 700; color: #fff; border-bottom: 2px solid #2aac94; letter-spacing: -.15px; }
.m-insert { width: 73px; }
.m-model { width: 103px; }
.m-view { width: 66px; }
.m-opt { width: 100px; }
.share { margin: -2px 0 0 auto; width: 105px; height: 30px; border: 0; border-radius: 4px; background: #0e6a58; color: #b9cdc8; font: 14px "Open Sans", sans-serif; display: flex; align-items: center; padding: 0 10px 0 9px; gap: 10px; }
.share svg:last-child { margin-left: -3px; }

/* ribbon */
.ribbon { flex: none; position: relative; z-index: 2; margin: 0 10px; height: 50px; border-radius: 9px; background: #292929; display: flex; align-items: center; font-size: 16px; letter-spacing: -.05px; box-shadow: 0 1px 4px rgba(0,0,0,.3); color: #fff; }
.rgroup { height: 30px; padding-top: 10px; display: flex; align-items: center; border-right: 1px solid #434343; }
.g1 { width: 126px; padding-left: 25px; }
.g1 .chev { margin: 0 19px 0 6px; }
.g1 .brush { margin-top: -2px; }
.g2 { width: 71px; padding-left: 21px; gap: 5px; }
.g3 { width: 61px; padding-left: 20px; }
.g4 { width: 60px; padding-left: 19px; }
.g5 { width: 61px; padding-left: 20px; }
.g6 { width: 163px; padding-left: 20px; }
.sens { width: 78px; margin: 0 8px 0 11px; color: #5e5e5e; letter-spacing: .05px; }
.g7 { width: 132px; padding-left: 20px; gap: 12px; }
.g8 { width: 131px; padding-left: 18px; gap: 12px; }
.g9 { width: 61px; padding: 8px 0 0 19px; gap: 5px; }
.g9 i { width: 4px; height: 4px; border-radius: 50%; background: #ddd; }
.collapse { margin: 22px 13px 0 auto; stroke-width: 2.2; }

/* work area */
.work { flex: none; height: 853px; display: grid; grid-template-columns: 51px 1739px 43px 44px 43px; background: #141414; border-bottom: 1px solid #666; }
.rail { display: flex; flex-direction: column; border-right: 1px solid #333; }
.rail span { height: 50px; display: flex; align-items: center; justify-content: center; padding-bottom: 3px; }
.rail .active { box-shadow: inset 3px 0 #2aac94; }
.rail span:last-child { padding-right: 3px; }
.daxt { font: 700 8px "Open Sans", sans-serif; stroke: none; fill: #ccc; }
.center { display: flex; flex-direction: column; }
.stage { height: 808px; background: #fff; display: flex; justify-content: space-between; padding-left: 137px; }
.canvas { width: 1424px; height: 800px; border: 2px dotted #5c5c5c; border-top: 0; display: grid; grid-template-columns: 630px 790px; grid-template-rows: 350px 445px; }
.v3 { grid-column: 1 / 3; }
.vt { font: 17.500px Roboto, sans-serif; fill: #252423; }
.ax { font: 15.500px Roboto, sans-serif; fill: #252423; }
.lg { font: 14.500px "Open Sans", sans-serif; fill: #605e5c; }
.lg.b { font-weight: 700; }
.tk { font: 12px "Open Sans", sans-serif; fill: #605e5c; }
.gr { fill: none; stroke: #c4c4c4; stroke-dasharray: 1.300 4.200; }
.p polyline { fill: none; stroke-width: 3.400; stroke-linejoin: miter; stroke-linecap: round; vector-effect: non-scaling-stroke; }
.s1 { stroke: #118dff; } .f1 { fill: #118dff; }
.s2 { stroke: #12239e; } .f2 { fill: #12239e; }
.s3 { stroke: #e66c37; } .f3 { fill: #e66c37; }
.s4 { stroke: #6b007b; } .f4 { fill: #6b007b; }
.s5 { stroke: #e044a7; } .f5 { fill: #e044a7; }
.s6 { stroke: #744ec2; } .f6 { fill: #744ec2; }
.s7 { stroke: #d9b300; } .f7 { fill: #d9b300; }
.s8 { stroke: #d64550; } .f8 { fill: #d64550; }
.s9 { stroke: #197278; } .f9 { fill: #197278; }
.s10 { stroke: #1aab40; } .f10 { fill: #1aab40; }
.s11 { stroke: #15c6f4; } .f11 { fill: #15c6f4; }
.s12 { stroke: #4092ff; } .f12 { fill: #4092ff; }
.s13 { stroke: #ffa058; } .f13 { fill: #ffa058; }
.s14 { stroke: #be5dc9; } .f14 { fill: #be5dc9; }
.s15 { stroke: #f472d0; } .f15 { fill: #f472d0; }
.s16 { stroke: #b5a1ff; } .f16 { fill: #b5a1ff; }
.s17 { stroke: #c4a200; } .f17 { fill: #c4a200; }
.s18 { stroke: #ff8080; } .f18 { fill: #ff8080; }
.s19 { stroke: #00dbbc; } .f19 { fill: #00dbbc; }
.s20 { stroke: #5bd667; } .f20 { fill: #5bd667; }
.s21 { stroke: #0091d5; } .f21 { fill: #0091d5; }
.s22 { stroke: #4668c5; } .f22 { fill: #4668c5; }
.s23 { stroke: #ff6300; } .f23 { fill: #ff6300; }
.s24 { stroke: #99008a; } .f24 { fill: #99008a; }

.filters { width: 41px; border-left: 1px solid #b0b0b0; display: flex; flex-direction: column; align-items: center; padding-top: 18px; color: #252423; font-size: 17.500px; font-weight: 600; }
.dbl { fill: none; stroke: #fff; stroke-width: 1.500; }
.filters .dbl { stroke: #333; stroke-width: 1.300; }
.ficon { stroke: #333; stroke-width: 1.500; margin: 25px 0 12px 6px; }
.filters span, .pane span { writing-mode: vertical-rl; }
.filters span { margin-right: 2px; }
.pane { border-left: 1px solid #555; display: flex; flex-direction: column; align-items: center; padding-top: 19px; gap: 20px; font-size: 18px; font-weight: 700; color: #fff; letter-spacing: -.15px; }
.pane span { margin-right: 4px; }
.pane .dbl { stroke-width: 2; }

/* page tabs */
.pages { height: 44px; background: #292929; display: flex; color: #fff; font-size: 14.500px; letter-spacing: -.3px; }
.device { display: flex; padding: 6px 0 0 13px; }
.device.on { flex-direction: column; width: 42px; }
.device.on svg { margin-left: 2px; }
.device.on::after { content: ""; width: 29px; height: 4px; border-radius: 2px; background: #2aac94; margin-top: 5px; }
.device + .device { width: 70px; padding-left: 33px; }
.arr { fill: none; stroke: #bbb; margin: 16px 0 0 5px; }
.arr.r { margin: 16px 8px 0 20px; }
.tab { width: 95px; display: flex; justify-content: center; line-height: 45px; border-left: 1px solid #555; position: relative; }
.tab.current { font-weight: 700; border-bottom: 5px solid #2aac94; letter-spacing: -.55px; }
.tab.current b { position: absolute; top: 1px; right: 5px; font-size: 14px; line-height: 20px; }
.add { width: 49px; background: #2aac94; display: flex; justify-content: center; padding-top: 13px; }

/* status */
.status { flex: none; height: 28px; display: flex; align-items: center; font-size: 14px; letter-spacing: -.2px; padding: 2px 0 0 5px; }
.mode { width: 293px; margin: 0 21px 0 auto; letter-spacing: .17px; }
.pct { margin-left: 16px; width: 53px; letter-spacing: .2px; }
.pg { letter-spacing: -.1px; }
.fit { margin-right: 22px; }

/* taskbar */
.taskbar { flex: none; height: 61px; background: #212123; border-top: 2px solid; border-image: linear-gradient(90deg, #000 952px, #eee 952px) 1; display: flex; align-items: center; color: #fff; }
.weather { width: 588px; padding-left: 24px; display: flex; gap: 4px; align-items: center; font-size: 14px; line-height: 20px; letter-spacing: .1px; color: #c4c4c4; }
.weather svg { margin-top: -8px; }
.weather p { margin-top: -3px; }
.weather b { display: block; font-weight: 400; color: #fff; letter-spacing: -.1px; }
.badge { font: 14px "Open Sans", sans-serif; fill: #222; letter-spacing: -1px; }
.start { margin-left: 25px; }
.tsearch { width: 275px; height: 40px; margin: 0 15px 0 16px; border: 1px solid #5a5a5a; border-radius: 20px; background: #404040; display: flex; align-items: center; padding: 0 4px 0 14px; font-size: 16px; letter-spacing: 0; color: #d0d0d0; }
.tsearch span { margin-left: 12px; }
.tsearch i { margin-left: auto; width: 65px; height: 33px; border-radius: 17px; background: #555; display: flex; align-items: center; justify-content: center; }
.app2 { margin-left: 25px; }
.app3 { margin-left: 17px; }
.app4 { margin-left: 25px; }
.app5 { margin-left: 23px; }
.app6 { margin-left: 27px; }
.pbi { margin-left: 17px; width: 50px; height: 50px; border: 1px solid #3a3a3c; border-radius: 4px; background: #2e2e31; display: flex; flex-direction: column; align-items: center; padding-top: 9px; gap: 5px; }
.pbi i { width: 20px; height: 4px; border-radius: 2px; background: #f1605f; }
.tray { margin-left: auto; padding-right: 25px; display: flex; align-items: center; font-size: 14.500px; line-height: 20px; letter-spacing: -.2px; }
.lang { width: 30px; margin: -2px 22px 0 25px; text-align: center; }
.spk { margin-left: 9px; }
.bat { margin-left: 9px; }
.clock { width: 98px; text-align: right; margin: -3px 11px 0 0; letter-spacing: 0; }
.z1 { font: 700 9px "Open Sans", sans-serif; fill: #222; }
.z2 { font: 700 9px "Open Sans", sans-serif; fill: #fff; }
```
